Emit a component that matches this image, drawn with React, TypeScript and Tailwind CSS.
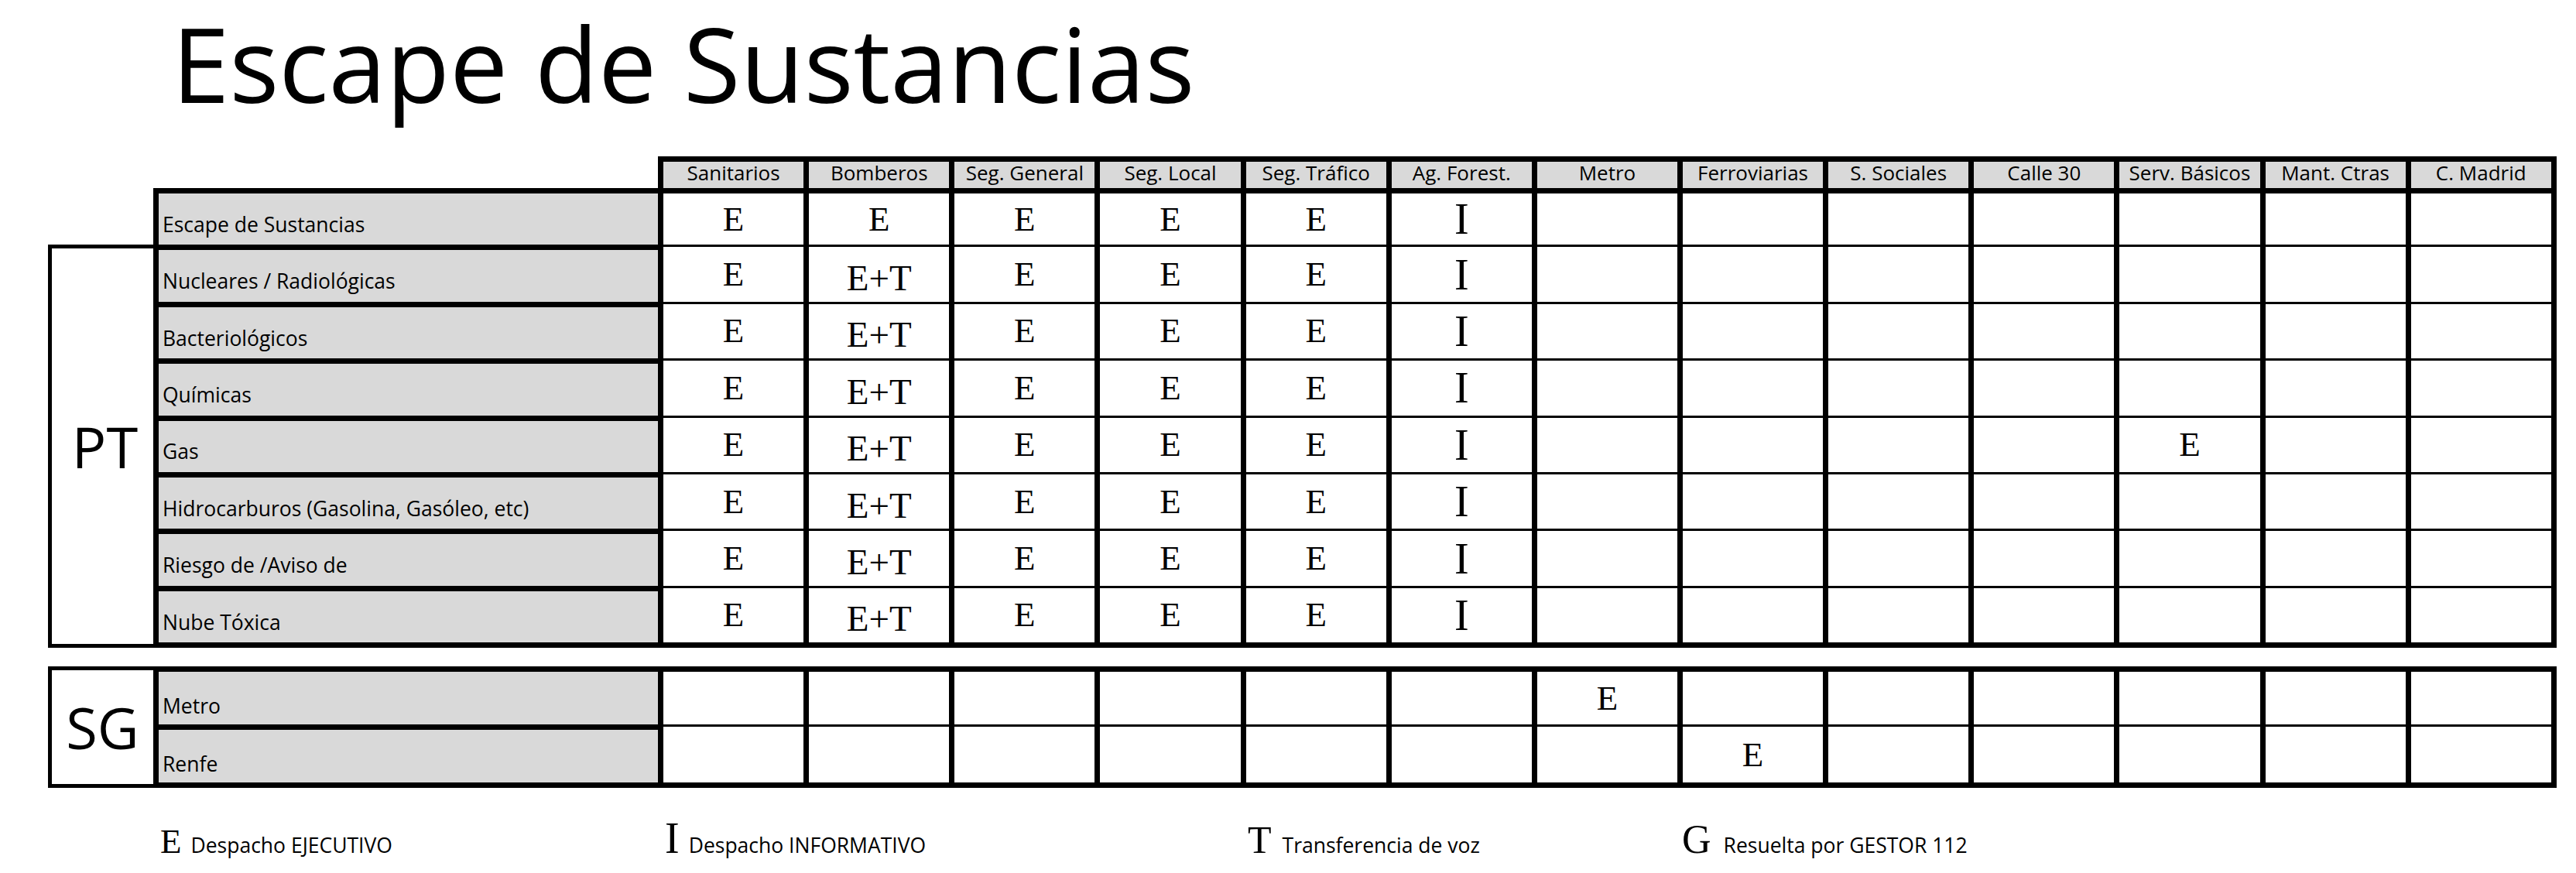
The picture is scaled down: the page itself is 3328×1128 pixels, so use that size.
import { Fragment } from "react";

const cols = [
  "Sanitarios",
  "Bomberos",
  "Seg. General",
  "Seg. Local",
  "Seg. Tráfico",
  "Ag. Forest.",
  "Metro",
  "Ferroviarias",
  "S. Sociales",
  "Calle 30",
  "Serv. Básicos",
  "Mant. Ctras",
  "C. Madrid",
];

const empty7 = ["", "", "", "", "", "", ""];
const std = ["E", "E+T", "E", "E", "E", "I", ...empty7];

const ptRows = [
  { label: "Nucleares / Radiológicas", values: std },
  { label: "Bacteriológicos", values: std },
  { label: "Químicas", values: std },
  {
    label: "Gas",
    values: ["E", "E+T", "E", "E", "E", "I", "", "", "", "", "E", "", ""],
  },
  { label: "Hidrocarburos (Gasolina, Gasóleo, etc)", values: std },
  { label: "Riesgo de /Aviso de", values: std },
  { label: "Nube Tóxica", values: std },
];

const sgRows = [
  {
    label: "Metro",
    values: ["", "", "", "", "", "", "E", "", "", "", "", "", ""],
  },
  {
    label: "Renfe",
    values: ["", "", "", "", "", "", "", "E", "", "", "", "", ""],
  },
];

function Mark({ v }: { v: string }) {
  if (!v) return null;
  if (v === "I") return <span className="text-[56px] leading-none">I</span>;
  if (v === "E+T")
    return <span className="text-[47px] leading-none pt-[10px]">E+T</span>;
  return <span className="text-[45px] leading-none">E</span>;
}

function Row({
  label,
  values,
  thickTop,
  sg,
}: {
  label: string;
  values: string[];
  thickTop?: boolean;
  sg?: boolean;
}) {
  return (
    <div className={sg ? "flex h-[75px]" : "flex h-[73.4px]"}>
      <div
        className={`w-[652px] border-l-[7px] border-t-[7px] border-black bg-[#d9d9d9] flex items-end pl-[5px] text-[26.5px] leading-none whitespace-nowrap ${
          sg ? "pb-[11px]" : "pb-[13px]"
        }`}
      >
        {label}
      </div>
      <div className="flex border-r-[7px] border-black">
        {values.map((v, i) => (
          <div
            key={i}
            className={`w-[188.15px] border-l-[7px] border-black flex items-center justify-center font-['Liberation_Serif',serif] ${
              thickTop ? "border-t-[7px]" : "border-t-[3px]"
            }`}
          >
            <Mark v={v} />
          </div>
        ))}
      </div>
    </div>
  );
}

function LegendItem({
  letter,
  size,
  text,
  width,
  gap,
}: {
  letter: string;
  size: string;
  text: string;
  width: string;
  gap: string;
}) {
  return (
    <div className={`flex items-baseline ${width}`}>
      <span className={`font-['Liberation_Serif',serif] leading-none ${size}`}>
        {letter}
      </span>
      <span className={`text-[26.5px] leading-none whitespace-nowrap ${gap}`}>
        {text}
      </span>
    </div>
  );
}

export default function App() {
  return (
    <div className="w-[3328px] h-[1128px] bg-white text-black font-['Open_Sans',sans-serif] overflow-hidden">
      {/* Title */}
      <div className="h-[202px] pl-[222px] pt-[1px]">
        <h1 className="text-[134px] leading-[1.2] font-normal whitespace-nowrap">
          Escape de Sustancias
        </h1>
      </div>

      {/* Column headers */}
      <div className="flex pl-[850px]">
        <div className="flex border-t-[7px] border-r-[7px] border-black">
          {cols.map((c) => (
            <div
              key={c}
              className="w-[188.15px] h-[34px] border-l-[7px] border-black bg-[#d9d9d9] flex items-end justify-center pb-[7px] text-[26px] leading-none whitespace-nowrap"
            >
              {c}
            </div>
          ))}
        </div>
      </div>

      {/* PT block */}
      <div className="pl-[62px]">
        <div className="flex">
          <div className="w-[136px]" />
          <Row
            label="Escape de Sustancias"
            values={["E", "E", "E", "E", "E", "I", ...empty7]}
            thickTop
          />
        </div>
        <div className="flex">
          <div className="w-[136px] border-l-[5px] border-t-[5px] border-b-[5px] border-black flex items-center justify-center pl-[6px] text-[74px] leading-none">
            PT
          </div>
          <div className="flex flex-col border-b-[7px] border-black">
            {ptRows.map((r) => (
              <Fragment key={r.label}>
                <Row label={r.label} values={r.values} />
              </Fragment>
            ))}
          </div>
        </div>

        {/* SG block */}
        <div className="flex mt-[24px]">
          <div className="w-[136px] border-l-[5px] border-t-[5px] border-b-[5px] border-black flex items-center justify-center text-[74px] leading-none">
            SG
          </div>
          <div className="flex flex-col border-b-[7px] border-black">
            {sgRows.map((r, i) => (
              <Row
                key={r.label}
                label={r.label}
                values={r.values}
                thickTop={i === 0}
                sg
              />
            ))}
          </div>
        </div>
      </div>

      {/* Legend */}
      <div className="flex items-baseline pl-[207px] mt-[37px]">
        <LegendItem
          letter="E"
          size="text-[45px]"
          text="Despacho EJECUTIVO"
          width="w-[652px]"
          gap="ml-[12px]"
        />
        <LegendItem
          letter="I"
          size="text-[56px]"
          text="Despacho INFORMATIVO"
          width="w-[753px]"
          gap="ml-[12px]"
        />
        <LegendItem
          letter="T"
          size="text-[50px]"
          text="Transferencia de voz"
          width="w-[561px]"
          gap="ml-[14px]"
        />
        <LegendItem
          letter="G"
          size="text-[52px]"
          text="Resuelta por GESTOR 112"
          width="w-auto"
          gap="ml-[16px]"
        />
      </div>
    </div>
  );
}
